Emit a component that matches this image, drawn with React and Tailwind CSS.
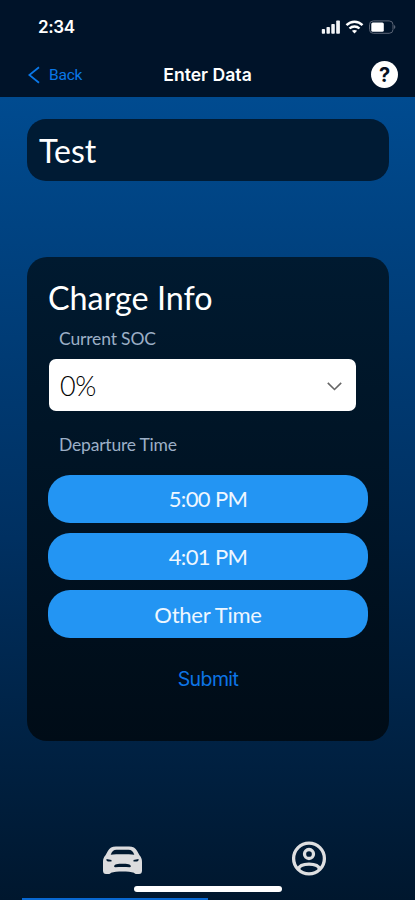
import React, { useState } from 'react';

const TIMES = ['5:00 PM', '4:01 PM'];

function StatusBar() {
  return (
    <div className="flex h-[52px] items-center justify-between pt-[2px] pr-[19px] pl-[38px]">
      <span className="pt-px font-['Inter'] text-[17px] font-semibold tracking-[-0.4px] text-white">2:34</span>
      <div className="flex items-center gap-[4px]">
        <svg width="20" height="14" viewBox="0 0 20 14" fill="#f2f4f7">
          <rect x="0.8" y="9" width="3.2" height="4.7" rx="0.8" />
          <rect x="5.5" y="7" width="3.4" height="6.7" rx="0.8" />
          <rect x="10.3" y="4" width="3.5" height="9.7" rx="0.8" />
          <rect x="15.2" y="0.5" width="3.7" height="13.2" rx="0.8" />
        </svg>
        <svg width="19" height="14" viewBox="0 0 18 14" fill="none" stroke="#fff" strokeWidth="2.4">
          <path d="M1 5.2C5.5 0.6 12.5 0.6 17 5.2" />
          <path d="M4 8.5C6.8 5.8 11.2 5.8 14 8.5" />
          <path d="M9 13.6L6.4 10.8C7.8 9.6 10.2 9.6 11.6 10.8Z" fill="#fff" stroke="none" />
        </svg>
        <svg width="28" height="14" viewBox="0 0 28 14">
          <rect x="1.5" y="0.9" width="23.5" height="12.4" rx="3.8" fill="none" stroke="#5c6677" />
          <rect x="3.3" y="2.4" width="12.5" height="9.4" rx="1.5" fill="#fff" />
          <path d="M26.3 5V9C27.6 8.5 27.6 5.5 26.3 5Z" fill="#7c8595" />
        </svg>
      </div>
    </div>
  );
}

function NavBar() {
  return (
    <div className="grid h-[45px] grid-cols-3 items-center px-[17px] font-['Inter']">
      <button className="flex items-center gap-[9px] pl-[11px] text-[#0a78e8]">
        <svg width="12" height="18" viewBox="0 0 12 18" fill="none" stroke="currentColor" strokeWidth="1.8">
          <path d="M11 1.2L1.3 9L11 16.8" />
        </svg>
        <span className="pt-px font-['Roboto'] text-[15.5px] leading-5 tracking-[-0.2px]">Back</span>
      </button>
      <h1 className="pt-px text-center text-[17.6px] font-semibold whitespace-nowrap text-white">Enter Data</h1>
      <div className="flex h-[27px] w-[27px] items-center justify-center justify-self-end rounded-full bg-white text-[20px] font-bold text-[#06101f]">
        ?
      </div>
    </div>
  );
}

function TimeButton({ label, onClick }) {
  return (
    <button onClick={onClick} className="h-[47.5px] w-[320px] rounded-[22px] bg-[#2395f3] text-[22px] tracking-[-0.65px] text-[#eef7ff]">
      {label}
    </button>
  );
}

function TabBar() {
  return (
    <div className="mt-auto">
      <div className="flex h-[45px] justify-between pr-[88px] pl-[102px]">
        <svg className="mt-[5px]" width="41" height="29" viewBox="0 0 41 29">
          <path
            d="M14 0.5H27C31 0.5 33.5 2 35 4.8L37.5 9.3C39.4 11.2 40 13.5 40 16V24.5C40 27 39 28 37 28H35C33.5 28 32.5 27.5 32 26.7C27 25 14 25 9 26.7C8.5 27.5 7.5 28 6 28H4C2 28 1 27 1 24.5V16C1 13.5 1.6 11.2 3.5 9.3L6 4.8C7.5 2 10 0.5 14 0.5Z"
            fill="#dcdcde"
          />
          <path d="M14.5 3.8H26.5C29.5 3.8 31 5.2 32.3 8.8C26 8.2 15 8.2 8.7 8.8C10 5.2 11.5 3.8 14.5 3.8Z" fill="#00182f" />
          <path d="M4.5 13L9.5 14V15.4H6.2C4.8 15.4 4.2 14.6 4.5 13Z" fill="#00182f" />
          <path d="M36.5 13L31.5 14V15.4H34.8C36.2 15.4 36.8 14.6 36.5 13Z" fill="#00182f" />
          <path d="M14.5 18.3C18 17.7 23 17.7 26.5 18.3C29.3 19 29.5 21.2 27.8 21.2C23 20.8 18 20.8 13.2 21.2C11.5 21.2 11.7 19 14.5 18.3Z" fill="#00182f" />
        </svg>
        <svg width="36" height="36" viewBox="0 0 36 36" fill="none" stroke="#dedfe1" strokeWidth="3.3">
          <circle cx="18" cy="17.5" r="15.4" />
          <circle cx="18" cy="13" r="4.5" />
          <path d="M7.5 28C9 21.6 27 21.6 28.5 28" />
        </svg>
      </div>
      {/* Home indicator */}
      <div className="mx-auto h-[6px] w-[148px] rounded-full bg-white" />
      <div className="mt-[6px] ml-[22px] h-[2px] w-[186px] bg-[#0868d2]" />
    </div>
  );
}

export default function App() {
  const [time, setTime] = useState(null);

  return (
    <div className="flex h-[900px] w-[415px] flex-col overflow-hidden bg-[#001329] font-['Lato',sans-serif]">
      <StatusBar />
      <NavBar />

      <main className="flex flex-1 flex-col bg-linear-to-b from-[#004b90] from-0% via-[#003061] via-55% to-[#00172e] to-100% pt-[22px]">
        <div className="mx-[27px] flex h-[62px] w-[362px] items-center rounded-[19px] bg-[#001b34] px-[12px] pt-[2px] text-[32px] text-white">
          Test
        </div>

        {/* Charge form */}
        <section className="mx-[27px] mt-[76px] flex h-[484px] w-[362px] flex-col rounded-[20px] bg-linear-to-b from-[#001a30] to-[#000c17] px-[21px]">
          <h2 className="mt-[21px] text-[32.3px] leading-[40px] text-white">Charge Info</h2>
          <label className="mt-[10px] ml-[11px] text-[17.5px] leading-[22px] tracking-[-0.15px] text-[#9cafc6]">Current SOC</label>
          <button className="mt-[9px] ml-px flex h-[52px] w-[307px] items-center justify-between rounded-[7px] bg-white pt-[2px] pr-[14px] pl-[11px] text-[27px] font-light tracking-[-0.4px] text-black">
            0%
            <svg width="15" height="9" viewBox="0 0 15 9" fill="none" stroke="#666" strokeWidth="1.6">
              <path d="M0.8 0.9L7.5 7.5L14.2 0.9" />
            </svg>
          </button>
          <label className="mt-[23px] ml-[11px] text-[17.5px] leading-[22px] tracking-[-0.2px] text-[#9cafc6]">Departure Time</label>
          <div className="mt-[19px] flex flex-col gap-[10px]">
            {TIMES.map(t => (
              <TimeButton key={t} label={t} onClick={() => setTime(t)} />
            ))}
            <button onClick={() => setTime('other')} className="h-[47.5px] w-[320px] rounded-[22px] bg-[#2395f3] pt-px text-[22px] tracking-[-0.25px] text-[#eef7ff]">
              Other Time
            </button>
          </div>
          <button disabled={!time} className="mx-auto mt-[27px] font-['Inter'] text-[19.5px] leading-[28px] tracking-[-0.6px] text-[#0d75e6]">
            Submit
          </button>
        </section>

        <TabBar />
      </main>
    </div>
  );
}
